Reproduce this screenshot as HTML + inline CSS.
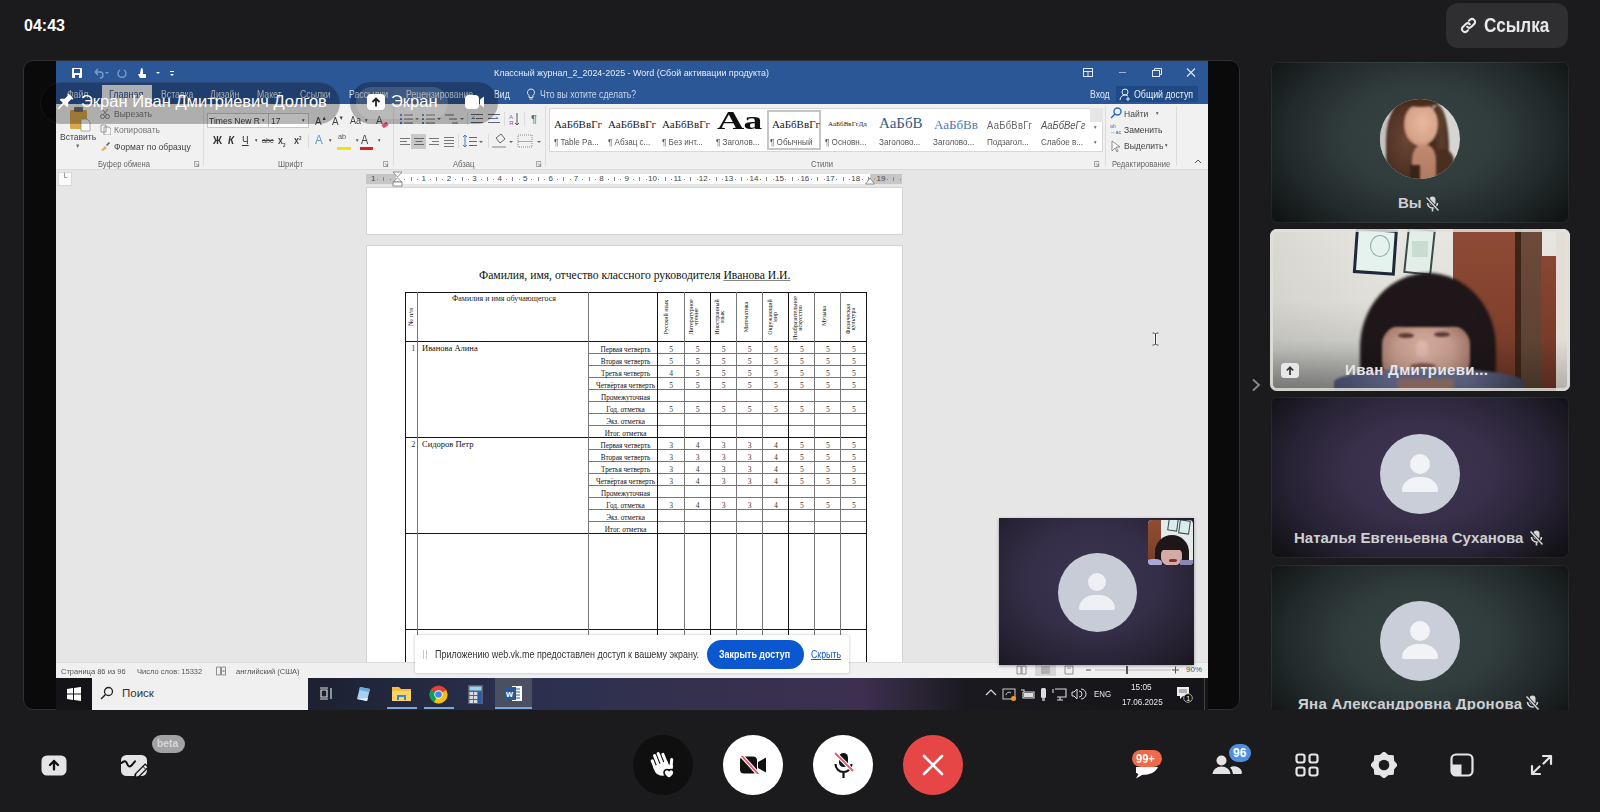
<!DOCTYPE html>
<html><head><meta charset="utf-8">
<style>
*{box-sizing:border-box;margin:0;padding:0}
html,body{width:1600px;height:812px;overflow:hidden;background:#1b1b1d;font-family:"Liberation Sans",sans-serif;position:relative}
.a{position:absolute}
.t{position:absolute;white-space:nowrap;line-height:1}
</style></head><body>
<!-- timer -->
<div class="t" style="left:24px;top:18px;font-size:16px;font-weight:bold;color:#fff">04:43</div>
<!-- link button -->
<div class="a" style="left:1446px;top:3px;width:122px;height:45px;border-radius:12px;background:#2f2f31"></div>
<div class="t" style="left:1484px;top:16px;font-size:19.5px;font-weight:bold;color:#e8e8ea;transform:scaleX(.88);transform-origin:0 0">Ссылка</div>
<svg class="a" style="left:1460px;top:17px" width="17" height="17" viewBox="0 0 17 17"><g fill="none" stroke="#e8e8ea" stroke-width="2" stroke-linecap="round"><path d="M7.2 9.8 a3 3 0 0 0 4.2 0 l3-3 a3 3 0 0 0 -4.2-4.2 l-1.3 1.3"/><path d="M9.8 7.2 a3 3 0 0 0 -4.2 0 l-3 3 a3 3 0 0 0 4.2 4.2 l1.3-1.3"/></g></svg>

<!-- stage -->
<div class="a" id="stage" style="left:23px;top:60px;width:1217px;height:650px;border-radius:10px;background:#0a0a0a;overflow:hidden">
  <div class="a" id="word" style="left:33px;top:0px;width:1152px;height:650px;background:#e6e6e6;overflow:hidden">

    <!-- title bar -->
    <div class="a" style="left:0;top:0;width:1152px;height:44px;background:#2b5797"></div>
    <!-- QAT icons -->
    <svg class="a" style="left:15px;top:7px" width="120" height="12" viewBox="0 0 120 12">
      <rect x="1" y="1" width="10" height="10" fill="#fff" rx="1"/><rect x="3" y="2" width="6" height="4" fill="#2b5797"/><rect x="4" y="8" width="4" height="3" fill="#2b5797"/>
      <path d="M24 5 l3-3 M24 5 l3 3 M24 5 h5 a3 3 0 0 1 0 6" stroke="#7d9fd0" stroke-width="1.3" fill="none"/>
      <path d="M34 5 l2 2 l2-2z" fill="#7d9fd0"/>
      <path d="M49 3 a4 4 0 1 0 4 0" stroke="#7d9fd0" stroke-width="1.3" fill="none"/>
      <path d="M70 1 a2 2 0 0 1 2 2 v4 h2 a1 1 0 0 1 1 1 v3 h-6 l-2-4 h2z" fill="#fff"/>
      <path d="M85 5 l2 2 l2-2z" fill="#fff"/>
      <rect x="99" y="4" width="4" height="1" fill="#fff"/><path d="M99 7 l2 2 l2-2z" fill="#fff"/>
    </svg>
    <div class="t" style="left:438px;top:8px;font-size:9.6px;color:#e8eef7;transform:scaleX(.93);transform-origin:0 0">Классный журнал_2_2024-2025 - Word (Сбой активации продукта)</div>
    <svg class="a" style="left:1026px;top:7px" width="126" height="12" viewBox="0 0 126 12">
      <rect x="1.5" y="1.5" width="9" height="8" stroke="#dfe7f3" stroke-width="1" fill="none"/><rect x="2" y="4" width="8" height="1" fill="#dfe7f3"/><rect x="5.5" y="4" width="1" height="5" fill="#dfe7f3"/>
      <rect x="37" y="5" width="7" height="1" fill="#9bb3d8"/>
      <rect x="70.5" y="3.5" width="7" height="6" stroke="#dfe7f3" stroke-width="1" fill="none"/><path d="M72.5 3.5 v-2 h7 v6 h-2" stroke="#dfe7f3" stroke-width="1" fill="none"/>
      <path d="M105 1.5 l8 8 M113 1.5 l-8 8" stroke="#dfe7f3" stroke-width="1.1"/>
    </svg>
    <!-- tabs -->
    <div class="t" style="left:11px;top:30px;font-size:10px;color:#dfe7f3;transform:scaleX(.87);transform-origin:0 0">Файл</div>
    <div class="a" style="left:46px;top:25px;width:50px;height:19px;background:#f1f1f1"></div>
    <div class="t" style="left:53px;top:30px;font-size:10px;color:#2b5797;transform:scaleX(.9);transform-origin:0 0">Главная</div>
    <div class="t" style="left:105px;top:30px;font-size:10px;color:#dfe7f3;transform:scaleX(.87);transform-origin:0 0">Вставка</div>
    <div class="t" style="left:154px;top:30px;font-size:10px;color:#dfe7f3;transform:scaleX(.87);transform-origin:0 0">Дизайн</div>
    <div class="t" style="left:201px;top:30px;font-size:10px;color:#dfe7f3;transform:scaleX(.87);transform-origin:0 0">Макет</div>
    <div class="t" style="left:244px;top:30px;font-size:10px;color:#dfe7f3;transform:scaleX(.87);transform-origin:0 0">Ссылки</div>
    <div class="t" style="left:293px;top:30px;font-size:10px;color:#dfe7f3;transform:scaleX(.87);transform-origin:0 0">Рассылки</div>
    <div class="t" style="left:350px;top:30px;font-size:10px;color:#dfe7f3;transform:scaleX(.87);transform-origin:0 0">Рецензирование</div>
    <div class="t" style="left:438px;top:30px;font-size:10px;color:#dfe7f3;transform:scaleX(.87);transform-origin:0 0">Вид</div>
    <svg class="a" style="left:470px;top:28px" width="10" height="13" viewBox="0 0 10 13"><path d="M5 1 a3.5 3.5 0 0 0 -2 6.4 v2 h4 v-2 a3.5 3.5 0 0 0 -2-6.4z M3.5 11 h3" stroke="#dfe7f3" stroke-width="1" fill="none"/></svg>
    <div class="t" style="left:484px;top:30px;font-size:10px;color:#c8d4e8;transform:scaleX(.87);transform-origin:0 0">Что вы хотите сделать?</div>
    <div class="t" style="left:1034px;top:30px;font-size:10px;color:#dfe7f3;transform:scaleX(.87);transform-origin:0 0">Вход</div>
    <div class="a" style="left:1060px;top:26px;width:82px;height:16px;background:#1f4a85"></div>
    <svg class="a" style="left:1063px;top:28px" width="13" height="13" viewBox="0 0 13 13"><circle cx="6" cy="4" r="3" stroke="#dfe7f3" stroke-width="1" fill="none"/><path d="M1 12 a5 5 0 0 1 8-4 M9 9 v4 M7 11 h4" stroke="#dfe7f3" stroke-width="1" fill="none"/></svg>
    <div class="t" style="left:1078px;top:30px;font-size:10px;color:#e8eef7;transform:scaleX(.88);transform-origin:0 0">Общий доступ</div>

    <div class="a" style="left:0;top:44px;width:1152px;height:66px;background:#f1f1f1;border-bottom:1px solid #dadada"></div>
    <div class="a" style="left:0;top:-2px;width:1152px;height:110px">
<!-- clipboard -->
    <svg class="a" style="left:12px;top:48px" width="24" height="26" viewBox="0 0 24 26">
      <rect x="2" y="4" width="17" height="19" fill="#d9a84a" rx="1"/><rect x="6" y="1" width="9" height="5" fill="#6d6d6d" rx="1"/>
      <path d="M13 13 h6 l3 3 v9 h-9z" fill="#fafafa" stroke="#9a9a9a" stroke-width="0.8"/>
    </svg>
    <div class="t" style="left:4px;top:74px;font-size:9.5px;color:#444;transform:scaleX(.9);transform-origin:0 0">Вставить</div>
    <div class="t" style="left:19px;top:85px;font-size:6px;color:#666;transform:scaleX(.9);transform-origin:0 0">▼</div>
    <svg class="a" style="left:44px;top:51px" width="10" height="10" viewBox="0 0 10 10"><circle cx="2.5" cy="7.5" r="2" stroke="#888" fill="none"/><circle cx="7.5" cy="7.5" r="2" stroke="#888" fill="none"/><path d="M3 6 L8 0 M7 6 L2 0" stroke="#888"/></svg>
    <div class="t" style="left:58px;top:51px;font-size:9.5px;color:#777;transform:scaleX(.9);transform-origin:0 0">Вырезать</div>
    <svg class="a" style="left:44px;top:66px" width="11" height="11" viewBox="0 0 11 11"><path d="M1 1h5v7H1z M4 3h5l2 2v6H4z" stroke="#888" stroke-width="0.8" fill="#f5f5f5"/></svg>
    <div class="t" style="left:58px;top:67px;font-size:9.5px;color:#777;transform:scaleX(.9);transform-origin:0 0">Копировать</div>
    <svg class="a" style="left:44px;top:82px" width="11" height="11" viewBox="0 0 11 11"><path d="M1 10 l4-4 l2 2 l-4 3z" fill="#e0b060"/><path d="M6 5 l3-3 l1 1 l-3 3z" fill="#555"/></svg>
    <div class="t" style="left:58px;top:84px;font-size:9.5px;color:#444;transform:scaleX(.9);transform-origin:0 0">Формат по образцу</div>
    <div class="t" style="left:42px;top:102px;font-size:8.5px;color:#666;transform:scaleX(.9);transform-origin:0 0">Буфер обмена</div>
    <div class="t" style="left:138px;top:103px;font-size:7px;color:#888;transform:scaleX(.9);transform-origin:0 0"><svg width="6" height="6" viewBox="0 0 6 6" style="display:block"><path d="M0.5 0.5 h5 v5 h-5z M2 2 l3 3 M5 3 v2 h-2" stroke="#888" stroke-width="0.8" fill="none"/></svg></div>
    <div class="a" style="left:147px;top:48px;width:1px;height:60px;background:#dcdcdc"></div>
    <!-- font -->
    <div class="a" style="left:151px;top:55px;width:62px;height:15px;background:#fff;border:1px solid #c6c6c6"></div>
    <div class="t" style="left:153px;top:58px;font-size:9.5px;color:#444;transform:scaleX(.9);transform-origin:0 0">Times New R</div>
    <div class="t" style="left:205px;top:60px;font-size:5px;color:#555;transform:scaleX(.9);transform-origin:0 0">▼</div>
    <div class="a" style="left:212px;top:55px;width:41px;height:15px;background:#fff;border:1px solid #c6c6c6"></div>
    <div class="t" style="left:215px;top:58px;font-size:9.5px;color:#444;transform:scaleX(.9);transform-origin:0 0">17</div>
    <div class="t" style="left:245px;top:60px;font-size:5px;color:#555;transform:scaleX(.9);transform-origin:0 0">▼</div>
    <div class="t" style="left:259px;top:57px;font-size:11px;color:#444;transform:scaleX(.9);transform-origin:0 0">A<sup style="font-size:6px">▲</sup></div>
    <div class="t" style="left:276px;top:57px;font-size:11px;color:#444;transform:scaleX(.9);transform-origin:0 0">A<sup style="font-size:6px">▼</sup></div>
    <div class="t" style="left:294px;top:58px;font-size:10px;color:#444;transform:scaleX(.9);transform-origin:0 0">Aa</div><div class="t" style="left:308px;top:60px;font-size:5px;color:#555;transform:scaleX(.9);transform-origin:0 0">▼</div>
    <div class="t" style="left:320px;top:57px;font-size:11px;color:#555;transform:scaleX(.9);transform-origin:0 0">A</div><div class="a" style="left:326px;top:65px;width:6px;height:4px;background:#e0506a;transform:rotate(-35deg)"></div>
    <div class="t" style="left:157px;top:77px;font-size:11px;font-weight:bold;color:#333;transform:scaleX(.9);transform-origin:0 0">Ж</div>
    <div class="t" style="left:172px;top:77px;font-size:11px;font-weight:bold;font-style:italic;color:#333;transform:scaleX(.9);transform-origin:0 0">К</div>
    <div class="t" style="left:186px;top:77px;font-size:11px;color:#333;text-decoration:underline;transform:scaleX(.9);transform-origin:0 0">Ч</div>
    <div class="t" style="left:198px;top:80px;font-size:5px;color:#555;transform:scaleX(.9);transform-origin:0 0">▼</div>
    <div class="t" style="left:206px;top:79px;font-size:8px;color:#444;text-decoration:line-through;transform:scaleX(.9);transform-origin:0 0">abc</div>
    <div class="t" style="left:222px;top:78px;font-size:10px;font-weight:bold;color:#444;transform:scaleX(.9);transform-origin:0 0">x<sub style="font-size:5px">2</sub></div>
    <div class="t" style="left:238px;top:78px;font-size:10px;font-weight:bold;color:#444;transform:scaleX(.9);transform-origin:0 0">x<sup style="font-size:5px">2</sup></div>
    <div class="a" style="left:252px;top:76px;width:1px;height:14px;background:#dcdcdc"></div>
    <div class="t" style="left:259px;top:75px;font-size:13px;color:#5a9ad8;transform:scaleX(.9);transform-origin:0 0">A</div><div class="t" style="left:272px;top:80px;font-size:5px;color:#555;transform:scaleX(.9);transform-origin:0 0">▼</div>
    <div class="t" style="left:282px;top:75px;font-size:8px;color:#555;transform:scaleX(.9);transform-origin:0 0">ab</div><div class="a" style="left:281px;top:89px;width:14px;height:3px;background:#f5e10a"></div><div class="t" style="left:299px;top:80px;font-size:5px;color:#555;transform:scaleX(.9);transform-origin:0 0">▼</div>
    <div class="t" style="left:305px;top:76px;font-size:12px;color:#444;transform:scaleX(.9);transform-origin:0 0">A</div><div class="a" style="left:304px;top:89px;width:13px;height:3px;background:#d8201c"></div><div class="t" style="left:321px;top:80px;font-size:5px;color:#555;transform:scaleX(.9);transform-origin:0 0">▼</div>
    <div class="t" style="left:222px;top:102px;font-size:8.5px;color:#666;transform:scaleX(.9);transform-origin:0 0">Шрифт</div>
    <div class="t" style="left:327px;top:103px;font-size:7px;color:#888;transform:scaleX(.9);transform-origin:0 0"><svg width="6" height="6" viewBox="0 0 6 6" style="display:block"><path d="M0.5 0.5 h5 v5 h-5z M2 2 l3 3 M5 3 v2 h-2" stroke="#888" stroke-width="0.8" fill="none"/></svg></div>
    <div class="a" style="left:337px;top:48px;width:1px;height:60px;background:#dcdcdc"></div>
    <!-- paragraph -->
    <svg class="a" style="left:342px;top:54px" width="150" height="40" viewBox="0 0 150 40">
      <g fill="#4a7cc0"><circle cx="3" cy="3" r="1.2"/><circle cx="3" cy="7" r="1.2"/><circle cx="3" cy="11" r="1.2"/></g>
      <g fill="#666"><rect x="6" y="2.5" width="9" height="1"/><rect x="6" y="6.5" width="9" height="1"/><rect x="6" y="10.5" width="9" height="1"/></g>
      <path d="M17 6 l2 2 l2-2z" fill="#666"/>
      <g fill="#4a7cc0"><rect x="24" y="2" width="2" height="2"/><rect x="24" y="6" width="2" height="2"/><rect x="24" y="10" width="2" height="2"/></g>
      <g fill="#666"><rect x="28" y="2.5" width="9" height="1"/><rect x="28" y="6.5" width="9" height="1"/><rect x="28" y="10.5" width="9" height="1"/></g>
      <path d="M39 6 l2 2 l2-2z" fill="#666"/>
      <g fill="#666"><rect x="47" y="2.5" width="9" height="1"/><rect x="51" y="6.5" width="8" height="1"/><rect x="54" y="10.5" width="6" height="1"/></g>
      <path d="M62 6 l2 2 l2-2z" fill="#666"/>
      <rect x="69" y="0" width="1" height="14" fill="#dcdcdc"/>
      <g fill="#666"><rect x="73" y="2" width="12" height="1"/><rect x="78" y="6" width="7" height="1"/><rect x="73" y="10" width="12" height="1"/><rect x="90" y="2" width="12" height="1"/><rect x="90" y="6" width="7" height="1"/><rect x="90" y="10" width="12" height="1"/></g>
      <path d="M77 6.5 l-3 0 l2-2" stroke="#4a7cc0" fill="none"/><path d="M96 6.5 l4 0 l-2-2" stroke="#4a7cc0" fill="none"/>
      <rect x="106" y="0" width="1" height="14" fill="#dcdcdc"/>
      <text x="111" y="7" font-size="6" fill="#4a7cc0" font-family="Liberation Sans">A</text><text x="111" y="13" font-size="6" fill="#c040a0" font-family="Liberation Sans">Я</text><path d="M119 1 v12 l-2-2 M119 13 l2-2" stroke="#555" fill="none"/>
      <rect x="126" y="0" width="1" height="14" fill="#dcdcdc"/>
      <text x="133" y="11" font-size="11" fill="#666" font-family="Liberation Sans">¶</text>
      <g fill="#777"><rect x="57" y="20" width="0" height="0"/></g>
    </svg>
    <svg class="a" style="left:340px;top:74px" width="200" height="20" viewBox="0 0 200 20">
      <g fill="#777"><rect x="4" y="6" width="10" height="1"/><rect x="4" y="9" width="7" height="1"/><rect x="4" y="12" width="10" height="1"/></g>
      <rect x="15" y="2" width="15" height="15" fill="#c9c9c9"/>
      <g fill="#666"><rect x="18" y="6" width="10" height="1"/><rect x="19.5" y="9" width="7" height="1"/><rect x="18" y="12" width="10" height="1"/></g>
      <g fill="#777"><rect x="33" y="6" width="10" height="1"/><rect x="36" y="9" width="7" height="1"/><rect x="33" y="12" width="10" height="1"/></g>
      <g fill="#777"><rect x="48" y="5" width="10" height="1"/><rect x="48" y="8" width="10" height="1"/><rect x="48" y="11" width="10" height="1"/><rect x="48" y="14" width="10" height="1"/></g>
      <rect x="62" y="2" width="1" height="14" fill="#dcdcdc"/>
      <path d="M69 3 v12 M67 5 l2-2 l2 2 M67 13 l2 2 l2-2" stroke="#4a7cc0" fill="none"/><g fill="#666"><rect x="73" y="5" width="8" height="1"/><rect x="73" y="9" width="8" height="1"/><rect x="73" y="13" width="8" height="1"/></g>
      <path d="M83 9 l2 2 l2-2z" fill="#666"/>
      <rect x="92" y="2" width="1" height="14" fill="#dcdcdc"/>
      <path d="M100 6 l5-4 l4 5 l-5 4z" stroke="#666" fill="none"/><rect x="96" y="14" width="14" height="2" fill="#bbb"/>
      <path d="M113 9 l2 2 l2-2z" fill="#666"/>
      <rect x="122" y="3" width="14" height="12" stroke="#888" stroke-dasharray="1 1" fill="none"/><rect x="122" y="9" width="14" height="0.8" fill="#999"/>
      <path d="M141 9 l2 2 l2-2z" fill="#666"/>
    </svg>
    <div class="t" style="left:397px;top:102px;font-size:8.5px;color:#666;transform:scaleX(.9);transform-origin:0 0">Абзац</div>
    <div class="t" style="left:480px;top:103px;font-size:7px;color:#888;transform:scaleX(.9);transform-origin:0 0"><svg width="6" height="6" viewBox="0 0 6 6" style="display:block"><path d="M0.5 0.5 h5 v5 h-5z M2 2 l3 3 M5 3 v2 h-2" stroke="#888" stroke-width="0.8" fill="none"/></svg></div>
    <div class="a" style="left:489px;top:48px;width:1px;height:60px;background:#dcdcdc"></div>
    <!-- styles gallery -->
    <div class="a" style="left:493px;top:49.5px;width:554px;height:44px;background:#fff;border:1px solid #d8d8d8"></div>
    <div class="a" id="gal" style="left:494px;top:50.5px;width:540px;height:42px">
      <div class="t" style="left:4px;top:10px;font-size:11px;font-family:'Liberation Serif',serif;color:#222">АаБбВвГг</div><div class="t" style="left:4px;top:29px;font-size:9px;color:#555;transform:scaleX(.9);transform-origin:0 0">¶ Table Pa...</div>
      <div class="t" style="left:58px;top:10px;font-size:11px;font-family:'Liberation Serif',serif;color:#222">АаБбВвГг</div><div class="t" style="left:58px;top:29px;font-size:9px;color:#555;transform:scaleX(.9);transform-origin:0 0">¶ Абзац с...</div>
      <div class="t" style="left:112px;top:10px;font-size:11px;font-family:'Liberation Serif',serif;color:#222">АаБбВвГг</div><div class="t" style="left:112px;top:29px;font-size:9px;color:#555;transform:scaleX(.9);transform-origin:0 0">¶ Без инт...</div>
      <div class="t" style="left:167px;top:-1px;font-size:26px;font-family:'Liberation Serif',serif;font-weight:bold;color:#111;letter-spacing:-0.5px;transform:scaleX(1.45);transform-origin:0 0">Aa</div><div class="t" style="left:166px;top:29px;font-size:9px;color:#555;transform:scaleX(.9);transform-origin:0 0">¶ Заголов...</div>
      <div class="a" style="left:217px;top:1px;width:54px;height:40px;border:2px solid #c6c6c6"></div>
      <div class="t" style="left:222px;top:10px;font-size:11px;font-family:'Liberation Serif',serif;color:#222">АаБбВвГг</div><div class="t" style="left:220px;top:29px;font-size:9px;color:#555;transform:scaleX(.9);transform-origin:0 0">¶ Обычный</div>
      <div class="t" style="left:278px;top:12px;font-size:7px;font-family:'Liberation Serif',serif;color:#222">АаБбВвГгДд</div><div class="t" style="left:275px;top:29px;font-size:9px;color:#555;transform:scaleX(.9);transform-origin:0 0">¶ Основн...</div>
      <div class="t" style="left:329px;top:7px;font-size:15px;font-family:'Liberation Serif',serif;color:#2e5c8a">АаБбВ</div><div class="t" style="left:329px;top:29px;font-size:9px;color:#555;transform:scaleX(.9);transform-origin:0 0">Заголово...</div>
      <div class="t" style="left:384px;top:9px;font-size:13px;font-family:'Liberation Serif',serif;color:#4a7ab5">АаБбВв</div><div class="t" style="left:383px;top:29px;font-size:9px;color:#555;transform:scaleX(.9);transform-origin:0 0">Заголово...</div>
      <div class="t" style="left:437px;top:11px;font-size:10.5px;color:#666;letter-spacing:0.3px;transform:scaleX(.9);transform-origin:0 0">АаБбВвГг</div><div class="t" style="left:437px;top:29px;font-size:9px;color:#555;transform:scaleX(.9);transform-origin:0 0">Подзагол...</div>
      <div class="t" style="left:491px;top:11px;font-size:10.5px;font-style:italic;color:#555;transform:scaleX(.9);transform-origin:0 0">АаБбВеГг</div><div class="t" style="left:491px;top:29px;font-size:9px;color:#555;transform:scaleX(.9);transform-origin:0 0">Слабое в...</div>
    </div>
    <div class="a" style="left:1034px;top:50px;width:13px;height:14px;background:#e6e6e6"></div>
    <div class="t" style="left:1037px;top:67px;font-size:5px;color:#666;transform:scaleX(.9);transform-origin:0 0">▼</div>
    <div class="t" style="left:1037px;top:82px;font-size:5px;color:#666;transform:scaleX(.9);transform-origin:0 0">▼</div>
    <div class="t" style="left:755px;top:102px;font-size:8.5px;color:#666;transform:scaleX(.9);transform-origin:0 0">Стили</div>
    <div class="t" style="left:1038px;top:103px;font-size:7px;color:#888;transform:scaleX(.9);transform-origin:0 0"><svg width="6" height="6" viewBox="0 0 6 6" style="display:block"><path d="M0.5 0.5 h5 v5 h-5z M2 2 l3 3 M5 3 v2 h-2" stroke="#888" stroke-width="0.8" fill="none"/></svg></div>
    <div class="a" style="left:1049px;top:48px;width:1px;height:60px;background:#dcdcdc"></div>
    <!-- editing -->
    <svg class="a" style="left:1054px;top:49px" width="12" height="12" viewBox="0 0 12 12"><circle cx="7.5" cy="4.5" r="3.5" stroke="#2b6cb8" stroke-width="1.4" fill="none"/><path d="M5 7 L1 11" stroke="#2b6cb8" stroke-width="1.6"/></svg>
    <div class="t" style="left:1068px;top:51px;font-size:9.5px;color:#444;transform:scaleX(.9);transform-origin:0 0">Найти</div><div class="t" style="left:1099px;top:53px;font-size:5px;color:#555;transform:scaleX(.9);transform-origin:0 0">▼</div>
    <div class="t" style="left:1054px;top:65px;font-size:6px;color:#9060b0;transform:scaleX(.9);transform-origin:0 0">ab</div><div class="t" style="left:1054px;top:71px;font-size:6px;color:#2b6cb8;transform:scaleX(.9);transform-origin:0 0">→ac</div>
    <div class="t" style="left:1068px;top:67px;font-size:9.5px;color:#444;transform:scaleX(.9);transform-origin:0 0">Заменить</div>
    <svg class="a" style="left:1055px;top:82px" width="9" height="13" viewBox="0 0 9 13"><path d="M1 1 v10 l3-3 l2 4 l1-1 l-2-4 h4z" stroke="#777" stroke-width="0.8" fill="#fff"/></svg>
    <div class="t" style="left:1068px;top:83px;font-size:9.5px;color:#444;transform:scaleX(.9);transform-origin:0 0">Выделить</div><div class="t" style="left:1108px;top:85px;font-size:5px;color:#555;transform:scaleX(.9);transform-origin:0 0">▼</div>
    <div class="t" style="left:1056px;top:102px;font-size:8.5px;color:#666;transform:scaleX(.9);transform-origin:0 0">Редактирование</div>
    <div class="a" style="left:1120px;top:48px;width:1px;height:60px;background:#dcdcdc"></div>
    <svg class="a" style="left:1138px;top:100px" width="8" height="6" viewBox="0 0 8 6"><path d="M1 5 l3-3 l3 3" stroke="#555" fill="none"/></svg>
</div>
<!-- ruler/doc -->
<div class="a" style="left:2.0px;top:112.0px;width:14.0px;height:14.0px;background:#fafafa;border:1px solid #d8d8d8"></div>
<div class="t" style="left:6.0px;top:114.0px;font-size:8px;color:#555;transform:scaleX(.94);transform-origin:0 0">└</div>
<div class="a" style="left:310.0px;top:114.0px;width:536.0px;height:10.0px;background:#c6c6c6"></div>
<div class="a" style="left:340.0px;top:114.0px;width:474.0px;height:10.0px;background:#fff"></div>
<div class="t" style="left:315.0px;top:115.0px;font-size:8px;color:#444">1</div>
<div class="a" style="left:327.0px;top:117.0px;width:1.0px;height:4.0px;background:#888"></div>
<div class="a" style="left:334.0px;top:119.0px;width:1.0px;height:1.0px;background:#888"></div>
<div class="a" style="left:321.0px;top:119.0px;width:1.0px;height:1.0px;background:#888"></div>
<div class="t" style="left:365.4px;top:115.0px;font-size:8px;color:#444">1</div>
<div class="t" style="left:390.8px;top:115.0px;font-size:8px;color:#444">2</div>
<div class="t" style="left:416.2px;top:115.0px;font-size:8px;color:#444">3</div>
<div class="t" style="left:441.6px;top:115.0px;font-size:8px;color:#444">4</div>
<div class="t" style="left:467.0px;top:115.0px;font-size:8px;color:#444">5</div>
<div class="t" style="left:492.4px;top:115.0px;font-size:8px;color:#444">6</div>
<div class="t" style="left:517.8px;top:115.0px;font-size:8px;color:#444">7</div>
<div class="t" style="left:543.2px;top:115.0px;font-size:8px;color:#444">8</div>
<div class="t" style="left:568.6px;top:115.0px;font-size:8px;color:#444">9</div>
<div class="t" style="left:592.0px;top:115.0px;font-size:8px;color:#444">10</div>
<div class="t" style="left:617.4px;top:115.0px;font-size:8px;color:#444">11</div>
<div class="t" style="left:642.8px;top:115.0px;font-size:8px;color:#444">12</div>
<div class="t" style="left:668.2px;top:115.0px;font-size:8px;color:#444">13</div>
<div class="t" style="left:693.6px;top:115.0px;font-size:8px;color:#444">14</div>
<div class="t" style="left:719.0px;top:115.0px;font-size:8px;color:#444">15</div>
<div class="t" style="left:744.4px;top:115.0px;font-size:8px;color:#444">16</div>
<div class="t" style="left:769.8px;top:115.0px;font-size:8px;color:#444">17</div>
<div class="t" style="left:795.2px;top:115.0px;font-size:8px;color:#444">18</div>
<div class="t" style="left:820.6px;top:115.0px;font-size:8px;color:#444">19</div>
<div class="a" style="left:348.4px;top:119.0px;width:1.0px;height:1.0px;background:#888"></div>
<div class="a" style="left:354.7px;top:117.0px;width:1.0px;height:4.0px;background:#888"></div>
<div class="a" style="left:361.1px;top:119.0px;width:1.0px;height:1.0px;background:#888"></div>
<div class="a" style="left:373.8px;top:119.0px;width:1.0px;height:1.0px;background:#888"></div>
<div class="a" style="left:380.1px;top:117.0px;width:1.0px;height:4.0px;background:#888"></div>
<div class="a" style="left:386.4px;top:119.0px;width:1.0px;height:1.0px;background:#888"></div>
<div class="a" style="left:399.1px;top:119.0px;width:1.0px;height:1.0px;background:#888"></div>
<div class="a" style="left:405.5px;top:117.0px;width:1.0px;height:4.0px;background:#888"></div>
<div class="a" style="left:411.9px;top:119.0px;width:1.0px;height:1.0px;background:#888"></div>
<div class="a" style="left:424.6px;top:119.0px;width:1.0px;height:1.0px;background:#888"></div>
<div class="a" style="left:430.9px;top:117.0px;width:1.0px;height:4.0px;background:#888"></div>
<div class="a" style="left:437.2px;top:119.0px;width:1.0px;height:1.0px;background:#888"></div>
<div class="a" style="left:449.9px;top:119.0px;width:1.0px;height:1.0px;background:#888"></div>
<div class="a" style="left:456.3px;top:117.0px;width:1.0px;height:4.0px;background:#888"></div>
<div class="a" style="left:462.6px;top:119.0px;width:1.0px;height:1.0px;background:#888"></div>
<div class="a" style="left:475.4px;top:119.0px;width:1.0px;height:1.0px;background:#888"></div>
<div class="a" style="left:481.7px;top:117.0px;width:1.0px;height:4.0px;background:#888"></div>
<div class="a" style="left:488.0px;top:119.0px;width:1.0px;height:1.0px;background:#888"></div>
<div class="a" style="left:500.8px;top:119.0px;width:1.0px;height:1.0px;background:#888"></div>
<div class="a" style="left:507.1px;top:117.0px;width:1.0px;height:4.0px;background:#888"></div>
<div class="a" style="left:513.5px;top:119.0px;width:1.0px;height:1.0px;background:#888"></div>
<div class="a" style="left:526.1px;top:119.0px;width:1.0px;height:1.0px;background:#888"></div>
<div class="a" style="left:532.5px;top:117.0px;width:1.0px;height:4.0px;background:#888"></div>
<div class="a" style="left:538.9px;top:119.0px;width:1.0px;height:1.0px;background:#888"></div>
<div class="a" style="left:551.5px;top:119.0px;width:1.0px;height:1.0px;background:#888"></div>
<div class="a" style="left:557.9px;top:117.0px;width:1.0px;height:4.0px;background:#888"></div>
<div class="a" style="left:564.2px;top:119.0px;width:1.0px;height:1.0px;background:#888"></div>
<div class="a" style="left:577.0px;top:119.0px;width:1.0px;height:1.0px;background:#888"></div>
<div class="a" style="left:583.3px;top:117.0px;width:1.0px;height:4.0px;background:#888"></div>
<div class="a" style="left:589.6px;top:119.0px;width:1.0px;height:1.0px;background:#888"></div>
<div class="a" style="left:602.3px;top:119.0px;width:1.0px;height:1.0px;background:#888"></div>
<div class="a" style="left:608.7px;top:117.0px;width:1.0px;height:4.0px;background:#888"></div>
<div class="a" style="left:615.0px;top:119.0px;width:1.0px;height:1.0px;background:#888"></div>
<div class="a" style="left:627.8px;top:119.0px;width:1.0px;height:1.0px;background:#888"></div>
<div class="a" style="left:634.1px;top:117.0px;width:1.0px;height:4.0px;background:#888"></div>
<div class="a" style="left:640.5px;top:119.0px;width:1.0px;height:1.0px;background:#888"></div>
<div class="a" style="left:653.1px;top:119.0px;width:1.0px;height:1.0px;background:#888"></div>
<div class="a" style="left:659.5px;top:117.0px;width:1.0px;height:4.0px;background:#888"></div>
<div class="a" style="left:665.8px;top:119.0px;width:1.0px;height:1.0px;background:#888"></div>
<div class="a" style="left:678.5px;top:119.0px;width:1.0px;height:1.0px;background:#888"></div>
<div class="a" style="left:684.9px;top:117.0px;width:1.0px;height:4.0px;background:#888"></div>
<div class="a" style="left:691.2px;top:119.0px;width:1.0px;height:1.0px;background:#888"></div>
<div class="a" style="left:704.0px;top:119.0px;width:1.0px;height:1.0px;background:#888"></div>
<div class="a" style="left:710.3px;top:117.0px;width:1.0px;height:4.0px;background:#888"></div>
<div class="a" style="left:716.6px;top:119.0px;width:1.0px;height:1.0px;background:#888"></div>
<div class="a" style="left:729.3px;top:119.0px;width:1.0px;height:1.0px;background:#888"></div>
<div class="a" style="left:735.7px;top:117.0px;width:1.0px;height:4.0px;background:#888"></div>
<div class="a" style="left:742.0px;top:119.0px;width:1.0px;height:1.0px;background:#888"></div>
<div class="a" style="left:754.8px;top:119.0px;width:1.0px;height:1.0px;background:#888"></div>
<div class="a" style="left:761.1px;top:117.0px;width:1.0px;height:4.0px;background:#888"></div>
<div class="a" style="left:767.5px;top:119.0px;width:1.0px;height:1.0px;background:#888"></div>
<div class="a" style="left:780.1px;top:119.0px;width:1.0px;height:1.0px;background:#888"></div>
<div class="a" style="left:786.5px;top:117.0px;width:1.0px;height:4.0px;background:#888"></div>
<div class="a" style="left:792.8px;top:119.0px;width:1.0px;height:1.0px;background:#888"></div>
<div class="a" style="left:805.5px;top:119.0px;width:1.0px;height:1.0px;background:#888"></div>
<div class="a" style="left:811.9px;top:117.0px;width:1.0px;height:4.0px;background:#888"></div>
<div class="a" style="left:818.2px;top:119.0px;width:1.0px;height:1.0px;background:#888"></div>
<div class="a" style="left:831.0px;top:119.0px;width:1.0px;height:1.0px;background:#888"></div>
<div class="a" style="left:837.3px;top:117.0px;width:1.0px;height:4.0px;background:#888"></div>
<div class="a" style="left:843.6px;top:119.0px;width:1.0px;height:1.0px;background:#888"></div>
<svg class="a" style="left:336px;top:111px" width="12" height="16" viewBox="0 0 12 16"><path d="M1 1 h9 l-4.5 5z M5.5 7 l4.5 4 h-9z" fill="#fff" stroke="#777" stroke-width="0.8"/><rect x="1" y="11" width="9" height="4" fill="#fff" stroke="#777" stroke-width="0.8"/></svg>
<svg class="a" style="left:809px;top:117px" width="10" height="8" viewBox="0 0 10 8"><path d="M5 1 l4.5 6 h-9z" fill="#fff" stroke="#777" stroke-width="0.8"/></svg>
<div class="a" style="left:311.0px;top:128.0px;width:535.0px;height:46.0px;background:#fff;box-shadow:0 0 0 1px #d4d4d4"></div>
<div class="a" style="left:311.0px;top:186.0px;width:535.0px;height:430.0px;background:#fff;box-shadow:0 0 0 1px #d4d4d4"></div>
<div class="t" style="left:423.0px;top:210.0px;font-family:'Liberation Serif',serif;font-size:11.65px;color:#111">Фамилия, имя, отчество классного руководителя <span style="text-decoration:underline;text-decoration-color:#888">Иванова И.И.</span></div>
<div class="a" style="left:349.0px;top:232.0px;width:462.0px;height:1.1px;background:#151515"></div>
<div class="a" style="left:349.0px;top:281.0px;width:462.0px;height:1.1px;background:#151515"></div>
<div class="a" style="left:532.0px;top:293.0px;width:279.0px;height:1.0px;background:#767676"></div>
<div class="a" style="left:532.0px;top:305.0px;width:279.0px;height:1.0px;background:#767676"></div>
<div class="a" style="left:532.0px;top:317.0px;width:279.0px;height:1.0px;background:#767676"></div>
<div class="a" style="left:532.0px;top:329.0px;width:279.0px;height:1.0px;background:#767676"></div>
<div class="a" style="left:532.0px;top:341.0px;width:279.0px;height:1.0px;background:#767676"></div>
<div class="a" style="left:532.0px;top:353.0px;width:279.0px;height:1.0px;background:#767676"></div>
<div class="a" style="left:532.0px;top:365.0px;width:279.0px;height:1.0px;background:#767676"></div>
<div class="a" style="left:349.0px;top:377.0px;width:462.0px;height:1.1px;background:#151515"></div>
<div class="a" style="left:532.0px;top:389.0px;width:279.0px;height:1.0px;background:#767676"></div>
<div class="a" style="left:532.0px;top:401.0px;width:279.0px;height:1.0px;background:#767676"></div>
<div class="a" style="left:532.0px;top:413.0px;width:279.0px;height:1.0px;background:#767676"></div>
<div class="a" style="left:532.0px;top:425.0px;width:279.0px;height:1.0px;background:#767676"></div>
<div class="a" style="left:532.0px;top:437.0px;width:279.0px;height:1.0px;background:#767676"></div>
<div class="a" style="left:532.0px;top:449.0px;width:279.0px;height:1.0px;background:#767676"></div>
<div class="a" style="left:532.0px;top:461.0px;width:279.0px;height:1.0px;background:#767676"></div>
<div class="a" style="left:349.0px;top:473.0px;width:462.0px;height:1.1px;background:#151515"></div>
<div class="a" style="left:349.0px;top:569.0px;width:462.0px;height:1.1px;background:#151515"></div>
<div class="a" style="left:349.0px;top:232.0px;width:1.1px;height:382.5px;background:#151515"></div>
<div class="a" style="left:361.0px;top:232.0px;width:1.0px;height:382.5px;background:#767676"></div>
<div class="a" style="left:532.0px;top:232.0px;width:1.0px;height:382.5px;background:#767676"></div>
<div class="a" style="left:601.0px;top:232.0px;width:1.1px;height:382.5px;background:#151515"></div>
<div class="a" style="left:628.0px;top:232.0px;width:1.0px;height:382.5px;background:#767676"></div>
<div class="a" style="left:654.0px;top:232.0px;width:1.1px;height:382.5px;background:#151515"></div>
<div class="a" style="left:680.0px;top:232.0px;width:1.0px;height:382.5px;background:#767676"></div>
<div class="a" style="left:706.0px;top:232.0px;width:1.0px;height:382.5px;background:#767676"></div>
<div class="a" style="left:732.0px;top:232.0px;width:1.1px;height:382.5px;background:#151515"></div>
<div class="a" style="left:758.0px;top:232.0px;width:1.0px;height:382.5px;background:#767676"></div>
<div class="a" style="left:784.0px;top:232.0px;width:1.0px;height:382.5px;background:#767676"></div>
<div class="a" style="left:810.0px;top:232.0px;width:1.1px;height:382.5px;background:#151515"></div>
<div class="t" style="left:396.0px;top:235.0px;font-family:'Liberation Serif',serif;font-size:8px;color:#222">Фамилия и имя обучающегося</div>
<div class="t" style="left:355.5px;top:257.0px;font-family:'Liberation Serif',serif;font-size:7px;color:#111;transform:translate(-50%,-50%) rotate(-90deg);text-align:center;line-height:0.75">№ п/п</div>
<div class="t" style="left:610.0px;top:257.0px;font-family:'Liberation Serif',serif;font-size:6px;color:#111;transform:translate(-50%,-50%) rotate(-90deg);text-align:center;line-height:0.75">Русский язык</div>
<div class="t" style="left:636.5px;top:257.0px;font-family:'Liberation Serif',serif;font-size:6px;color:#111;transform:translate(-50%,-50%) rotate(-90deg);text-align:center;line-height:0.75">Литературное<br>чтение</div>
<div class="t" style="left:662.5px;top:257.0px;font-family:'Liberation Serif',serif;font-size:6px;color:#111;transform:translate(-50%,-50%) rotate(-90deg);text-align:center;line-height:0.75">Иностранный<br>язык</div>
<div class="t" style="left:689.5px;top:256.5px;font-family:'Liberation Serif',serif;font-size:6px;color:#111;transform:translate(-50%,-50%) rotate(-90deg);text-align:center;line-height:0.75">Математика</div>
<div class="t" style="left:715.5px;top:257.0px;font-family:'Liberation Serif',serif;font-size:6px;color:#111;transform:translate(-50%,-50%) rotate(-90deg);text-align:center;line-height:0.75">Окружающий<br>мир</div>
<div class="t" style="left:740.5px;top:258.0px;font-family:'Liberation Serif',serif;font-size:6px;color:#111;transform:translate(-50%,-50%) rotate(-90deg);text-align:center;line-height:0.75">Изобразительное<br>искусство</div>
<div class="t" style="left:767.5px;top:256.0px;font-family:'Liberation Serif',serif;font-size:6px;color:#111;transform:translate(-50%,-50%) rotate(-90deg);text-align:center;line-height:0.75">Музыка</div>
<div class="t" style="left:794.0px;top:259.0px;font-family:'Liberation Serif',serif;font-size:6px;color:#111;transform:translate(-50%,-50%) rotate(-90deg);text-align:center;line-height:0.75">Физическая<br>культура</div>
<div class="t" style="left:355.5px;top:284.5px;font-family:'Liberation Serif',serif;font-size:7.5px;color:#222">1</div>
<div class="t" style="left:366.0px;top:284.0px;font-family:'Liberation Serif',serif;font-size:8.5px;color:#111">Иванова Алина</div>
<div class="t" style="left:535px;top:286.7px;width:69px;text-align:center;font-family:'Liberation Serif',serif;font-size:7.2px;color:#111">Первая четверть</div>
<div class="t" style="left:601.5px;top:285.9px;width:26.5px;text-align:center;font-family:'Liberation Serif',serif;font-size:7.6px;color:#3a3a3a;padding-left:1px">5</div>
<div class="t" style="left:628.0px;top:285.9px;width:26.5px;text-align:center;font-family:'Liberation Serif',serif;font-size:7.6px;color:#3a3a3a;padding-left:1px">5</div>
<div class="t" style="left:654.5px;top:285.9px;width:25.5px;text-align:center;font-family:'Liberation Serif',serif;font-size:7.6px;color:#3a3a3a;padding-left:1px">5</div>
<div class="t" style="left:680.0px;top:285.9px;width:26.5px;text-align:center;font-family:'Liberation Serif',serif;font-size:7.6px;color:#3a3a3a;padding-left:1px">5</div>
<div class="t" style="left:706.5px;top:285.9px;width:26.0px;text-align:center;font-family:'Liberation Serif',serif;font-size:7.6px;color:#3a3a3a;padding-left:1px">5</div>
<div class="t" style="left:732.5px;top:285.9px;width:26.0px;text-align:center;font-family:'Liberation Serif',serif;font-size:7.6px;color:#3a3a3a;padding-left:1px">5</div>
<div class="t" style="left:758.5px;top:285.9px;width:26.0px;text-align:center;font-family:'Liberation Serif',serif;font-size:7.6px;color:#3a3a3a;padding-left:1px">5</div>
<div class="t" style="left:784.5px;top:285.9px;width:26.0px;text-align:center;font-family:'Liberation Serif',serif;font-size:7.6px;color:#3a3a3a;padding-left:1px">5</div>
<div class="t" style="left:535px;top:298.7px;width:69px;text-align:center;font-family:'Liberation Serif',serif;font-size:7.2px;color:#111">Вторая четверть</div>
<div class="t" style="left:601.5px;top:297.9px;width:26.5px;text-align:center;font-family:'Liberation Serif',serif;font-size:7.6px;color:#3a3a3a;padding-left:1px">5</div>
<div class="t" style="left:628.0px;top:297.9px;width:26.5px;text-align:center;font-family:'Liberation Serif',serif;font-size:7.6px;color:#3a3a3a;padding-left:1px">5</div>
<div class="t" style="left:654.5px;top:297.9px;width:25.5px;text-align:center;font-family:'Liberation Serif',serif;font-size:7.6px;color:#3a3a3a;padding-left:1px">5</div>
<div class="t" style="left:680.0px;top:297.9px;width:26.5px;text-align:center;font-family:'Liberation Serif',serif;font-size:7.6px;color:#3a3a3a;padding-left:1px">5</div>
<div class="t" style="left:706.5px;top:297.9px;width:26.0px;text-align:center;font-family:'Liberation Serif',serif;font-size:7.6px;color:#3a3a3a;padding-left:1px">5</div>
<div class="t" style="left:732.5px;top:297.9px;width:26.0px;text-align:center;font-family:'Liberation Serif',serif;font-size:7.6px;color:#3a3a3a;padding-left:1px">5</div>
<div class="t" style="left:758.5px;top:297.9px;width:26.0px;text-align:center;font-family:'Liberation Serif',serif;font-size:7.6px;color:#3a3a3a;padding-left:1px">5</div>
<div class="t" style="left:784.5px;top:297.9px;width:26.0px;text-align:center;font-family:'Liberation Serif',serif;font-size:7.6px;color:#3a3a3a;padding-left:1px">5</div>
<div class="t" style="left:535px;top:310.7px;width:69px;text-align:center;font-family:'Liberation Serif',serif;font-size:7.2px;color:#111">Третья четверть</div>
<div class="t" style="left:601.5px;top:309.9px;width:26.5px;text-align:center;font-family:'Liberation Serif',serif;font-size:7.6px;color:#3a3a3a;padding-left:1px">4</div>
<div class="t" style="left:628.0px;top:309.9px;width:26.5px;text-align:center;font-family:'Liberation Serif',serif;font-size:7.6px;color:#3a3a3a;padding-left:1px">5</div>
<div class="t" style="left:654.5px;top:309.9px;width:25.5px;text-align:center;font-family:'Liberation Serif',serif;font-size:7.6px;color:#3a3a3a;padding-left:1px">5</div>
<div class="t" style="left:680.0px;top:309.9px;width:26.5px;text-align:center;font-family:'Liberation Serif',serif;font-size:7.6px;color:#3a3a3a;padding-left:1px">5</div>
<div class="t" style="left:706.5px;top:309.9px;width:26.0px;text-align:center;font-family:'Liberation Serif',serif;font-size:7.6px;color:#3a3a3a;padding-left:1px">5</div>
<div class="t" style="left:732.5px;top:309.9px;width:26.0px;text-align:center;font-family:'Liberation Serif',serif;font-size:7.6px;color:#3a3a3a;padding-left:1px">5</div>
<div class="t" style="left:758.5px;top:309.9px;width:26.0px;text-align:center;font-family:'Liberation Serif',serif;font-size:7.6px;color:#3a3a3a;padding-left:1px">5</div>
<div class="t" style="left:784.5px;top:309.9px;width:26.0px;text-align:center;font-family:'Liberation Serif',serif;font-size:7.6px;color:#3a3a3a;padding-left:1px">5</div>
<div class="t" style="left:535px;top:322.7px;width:69px;text-align:center;font-family:'Liberation Serif',serif;font-size:7.2px;color:#111">Четвёртая четверть</div>
<div class="t" style="left:601.5px;top:321.9px;width:26.5px;text-align:center;font-family:'Liberation Serif',serif;font-size:7.6px;color:#3a3a3a;padding-left:1px">5</div>
<div class="t" style="left:628.0px;top:321.9px;width:26.5px;text-align:center;font-family:'Liberation Serif',serif;font-size:7.6px;color:#3a3a3a;padding-left:1px">5</div>
<div class="t" style="left:654.5px;top:321.9px;width:25.5px;text-align:center;font-family:'Liberation Serif',serif;font-size:7.6px;color:#3a3a3a;padding-left:1px">5</div>
<div class="t" style="left:680.0px;top:321.9px;width:26.5px;text-align:center;font-family:'Liberation Serif',serif;font-size:7.6px;color:#3a3a3a;padding-left:1px">5</div>
<div class="t" style="left:706.5px;top:321.9px;width:26.0px;text-align:center;font-family:'Liberation Serif',serif;font-size:7.6px;color:#3a3a3a;padding-left:1px">5</div>
<div class="t" style="left:732.5px;top:321.9px;width:26.0px;text-align:center;font-family:'Liberation Serif',serif;font-size:7.6px;color:#3a3a3a;padding-left:1px">5</div>
<div class="t" style="left:758.5px;top:321.9px;width:26.0px;text-align:center;font-family:'Liberation Serif',serif;font-size:7.6px;color:#3a3a3a;padding-left:1px">5</div>
<div class="t" style="left:784.5px;top:321.9px;width:26.0px;text-align:center;font-family:'Liberation Serif',serif;font-size:7.6px;color:#3a3a3a;padding-left:1px">5</div>
<div class="t" style="left:535px;top:334.7px;width:69px;text-align:center;font-family:'Liberation Serif',serif;font-size:7.2px;color:#111">Промежуточная</div>
<div class="t" style="left:535px;top:346.7px;width:69px;text-align:center;font-family:'Liberation Serif',serif;font-size:7.2px;color:#111">Год. отметка</div>
<div class="t" style="left:601.5px;top:345.9px;width:26.5px;text-align:center;font-family:'Liberation Serif',serif;font-size:7.6px;color:#3a3a3a;padding-left:1px">5</div>
<div class="t" style="left:628.0px;top:345.9px;width:26.5px;text-align:center;font-family:'Liberation Serif',serif;font-size:7.6px;color:#3a3a3a;padding-left:1px">5</div>
<div class="t" style="left:654.5px;top:345.9px;width:25.5px;text-align:center;font-family:'Liberation Serif',serif;font-size:7.6px;color:#3a3a3a;padding-left:1px">5</div>
<div class="t" style="left:680.0px;top:345.9px;width:26.5px;text-align:center;font-family:'Liberation Serif',serif;font-size:7.6px;color:#3a3a3a;padding-left:1px">5</div>
<div class="t" style="left:706.5px;top:345.9px;width:26.0px;text-align:center;font-family:'Liberation Serif',serif;font-size:7.6px;color:#3a3a3a;padding-left:1px">5</div>
<div class="t" style="left:732.5px;top:345.9px;width:26.0px;text-align:center;font-family:'Liberation Serif',serif;font-size:7.6px;color:#3a3a3a;padding-left:1px">5</div>
<div class="t" style="left:758.5px;top:345.9px;width:26.0px;text-align:center;font-family:'Liberation Serif',serif;font-size:7.6px;color:#3a3a3a;padding-left:1px">5</div>
<div class="t" style="left:784.5px;top:345.9px;width:26.0px;text-align:center;font-family:'Liberation Serif',serif;font-size:7.6px;color:#3a3a3a;padding-left:1px">5</div>
<div class="t" style="left:535px;top:358.7px;width:69px;text-align:center;font-family:'Liberation Serif',serif;font-size:7.2px;color:#111">Экз. отметка</div>
<div class="t" style="left:535px;top:370.7px;width:69px;text-align:center;font-family:'Liberation Serif',serif;font-size:7.2px;color:#111">Итог. отметка</div>
<div class="t" style="left:355.5px;top:380.5px;font-family:'Liberation Serif',serif;font-size:7.5px;color:#222">2</div>
<div class="t" style="left:366.0px;top:380.0px;font-family:'Liberation Serif',serif;font-size:8.5px;color:#111">Сидоров Петр</div>
<div class="t" style="left:535px;top:382.7px;width:69px;text-align:center;font-family:'Liberation Serif',serif;font-size:7.2px;color:#111">Первая четверть</div>
<div class="t" style="left:601.5px;top:381.9px;width:26.5px;text-align:center;font-family:'Liberation Serif',serif;font-size:7.6px;color:#3a3a3a;padding-left:1px">3</div>
<div class="t" style="left:628.0px;top:381.9px;width:26.5px;text-align:center;font-family:'Liberation Serif',serif;font-size:7.6px;color:#3a3a3a;padding-left:1px">4</div>
<div class="t" style="left:654.5px;top:381.9px;width:25.5px;text-align:center;font-family:'Liberation Serif',serif;font-size:7.6px;color:#3a3a3a;padding-left:1px">3</div>
<div class="t" style="left:680.0px;top:381.9px;width:26.5px;text-align:center;font-family:'Liberation Serif',serif;font-size:7.6px;color:#3a3a3a;padding-left:1px">3</div>
<div class="t" style="left:706.5px;top:381.9px;width:26.0px;text-align:center;font-family:'Liberation Serif',serif;font-size:7.6px;color:#3a3a3a;padding-left:1px">4</div>
<div class="t" style="left:732.5px;top:381.9px;width:26.0px;text-align:center;font-family:'Liberation Serif',serif;font-size:7.6px;color:#3a3a3a;padding-left:1px">5</div>
<div class="t" style="left:758.5px;top:381.9px;width:26.0px;text-align:center;font-family:'Liberation Serif',serif;font-size:7.6px;color:#3a3a3a;padding-left:1px">5</div>
<div class="t" style="left:784.5px;top:381.9px;width:26.0px;text-align:center;font-family:'Liberation Serif',serif;font-size:7.6px;color:#3a3a3a;padding-left:1px">5</div>
<div class="t" style="left:535px;top:394.7px;width:69px;text-align:center;font-family:'Liberation Serif',serif;font-size:7.2px;color:#111">Вторая четверть</div>
<div class="t" style="left:601.5px;top:393.9px;width:26.5px;text-align:center;font-family:'Liberation Serif',serif;font-size:7.6px;color:#3a3a3a;padding-left:1px">3</div>
<div class="t" style="left:628.0px;top:393.9px;width:26.5px;text-align:center;font-family:'Liberation Serif',serif;font-size:7.6px;color:#3a3a3a;padding-left:1px">3</div>
<div class="t" style="left:654.5px;top:393.9px;width:25.5px;text-align:center;font-family:'Liberation Serif',serif;font-size:7.6px;color:#3a3a3a;padding-left:1px">3</div>
<div class="t" style="left:680.0px;top:393.9px;width:26.5px;text-align:center;font-family:'Liberation Serif',serif;font-size:7.6px;color:#3a3a3a;padding-left:1px">3</div>
<div class="t" style="left:706.5px;top:393.9px;width:26.0px;text-align:center;font-family:'Liberation Serif',serif;font-size:7.6px;color:#3a3a3a;padding-left:1px">4</div>
<div class="t" style="left:732.5px;top:393.9px;width:26.0px;text-align:center;font-family:'Liberation Serif',serif;font-size:7.6px;color:#3a3a3a;padding-left:1px">5</div>
<div class="t" style="left:758.5px;top:393.9px;width:26.0px;text-align:center;font-family:'Liberation Serif',serif;font-size:7.6px;color:#3a3a3a;padding-left:1px">5</div>
<div class="t" style="left:784.5px;top:393.9px;width:26.0px;text-align:center;font-family:'Liberation Serif',serif;font-size:7.6px;color:#3a3a3a;padding-left:1px">5</div>
<div class="t" style="left:535px;top:406.7px;width:69px;text-align:center;font-family:'Liberation Serif',serif;font-size:7.2px;color:#111">Третья четверть</div>
<div class="t" style="left:601.5px;top:405.9px;width:26.5px;text-align:center;font-family:'Liberation Serif',serif;font-size:7.6px;color:#3a3a3a;padding-left:1px">3</div>
<div class="t" style="left:628.0px;top:405.9px;width:26.5px;text-align:center;font-family:'Liberation Serif',serif;font-size:7.6px;color:#3a3a3a;padding-left:1px">4</div>
<div class="t" style="left:654.5px;top:405.9px;width:25.5px;text-align:center;font-family:'Liberation Serif',serif;font-size:7.6px;color:#3a3a3a;padding-left:1px">3</div>
<div class="t" style="left:680.0px;top:405.9px;width:26.5px;text-align:center;font-family:'Liberation Serif',serif;font-size:7.6px;color:#3a3a3a;padding-left:1px">3</div>
<div class="t" style="left:706.5px;top:405.9px;width:26.0px;text-align:center;font-family:'Liberation Serif',serif;font-size:7.6px;color:#3a3a3a;padding-left:1px">4</div>
<div class="t" style="left:732.5px;top:405.9px;width:26.0px;text-align:center;font-family:'Liberation Serif',serif;font-size:7.6px;color:#3a3a3a;padding-left:1px">5</div>
<div class="t" style="left:758.5px;top:405.9px;width:26.0px;text-align:center;font-family:'Liberation Serif',serif;font-size:7.6px;color:#3a3a3a;padding-left:1px">5</div>
<div class="t" style="left:784.5px;top:405.9px;width:26.0px;text-align:center;font-family:'Liberation Serif',serif;font-size:7.6px;color:#3a3a3a;padding-left:1px">5</div>
<div class="t" style="left:535px;top:418.7px;width:69px;text-align:center;font-family:'Liberation Serif',serif;font-size:7.2px;color:#111">Четвёртая четверть</div>
<div class="t" style="left:601.5px;top:417.9px;width:26.5px;text-align:center;font-family:'Liberation Serif',serif;font-size:7.6px;color:#3a3a3a;padding-left:1px">3</div>
<div class="t" style="left:628.0px;top:417.9px;width:26.5px;text-align:center;font-family:'Liberation Serif',serif;font-size:7.6px;color:#3a3a3a;padding-left:1px">4</div>
<div class="t" style="left:654.5px;top:417.9px;width:25.5px;text-align:center;font-family:'Liberation Serif',serif;font-size:7.6px;color:#3a3a3a;padding-left:1px">3</div>
<div class="t" style="left:680.0px;top:417.9px;width:26.5px;text-align:center;font-family:'Liberation Serif',serif;font-size:7.6px;color:#3a3a3a;padding-left:1px">3</div>
<div class="t" style="left:706.5px;top:417.9px;width:26.0px;text-align:center;font-family:'Liberation Serif',serif;font-size:7.6px;color:#3a3a3a;padding-left:1px">4</div>
<div class="t" style="left:732.5px;top:417.9px;width:26.0px;text-align:center;font-family:'Liberation Serif',serif;font-size:7.6px;color:#3a3a3a;padding-left:1px">5</div>
<div class="t" style="left:758.5px;top:417.9px;width:26.0px;text-align:center;font-family:'Liberation Serif',serif;font-size:7.6px;color:#3a3a3a;padding-left:1px">5</div>
<div class="t" style="left:784.5px;top:417.9px;width:26.0px;text-align:center;font-family:'Liberation Serif',serif;font-size:7.6px;color:#3a3a3a;padding-left:1px">5</div>
<div class="t" style="left:535px;top:430.7px;width:69px;text-align:center;font-family:'Liberation Serif',serif;font-size:7.2px;color:#111">Промежуточная</div>
<div class="t" style="left:535px;top:442.7px;width:69px;text-align:center;font-family:'Liberation Serif',serif;font-size:7.2px;color:#111">Год. отметка</div>
<div class="t" style="left:601.5px;top:441.9px;width:26.5px;text-align:center;font-family:'Liberation Serif',serif;font-size:7.6px;color:#3a3a3a;padding-left:1px">3</div>
<div class="t" style="left:628.0px;top:441.9px;width:26.5px;text-align:center;font-family:'Liberation Serif',serif;font-size:7.6px;color:#3a3a3a;padding-left:1px">4</div>
<div class="t" style="left:654.5px;top:441.9px;width:25.5px;text-align:center;font-family:'Liberation Serif',serif;font-size:7.6px;color:#3a3a3a;padding-left:1px">3</div>
<div class="t" style="left:680.0px;top:441.9px;width:26.5px;text-align:center;font-family:'Liberation Serif',serif;font-size:7.6px;color:#3a3a3a;padding-left:1px">3</div>
<div class="t" style="left:706.5px;top:441.9px;width:26.0px;text-align:center;font-family:'Liberation Serif',serif;font-size:7.6px;color:#3a3a3a;padding-left:1px">4</div>
<div class="t" style="left:732.5px;top:441.9px;width:26.0px;text-align:center;font-family:'Liberation Serif',serif;font-size:7.6px;color:#3a3a3a;padding-left:1px">5</div>
<div class="t" style="left:758.5px;top:441.9px;width:26.0px;text-align:center;font-family:'Liberation Serif',serif;font-size:7.6px;color:#3a3a3a;padding-left:1px">5</div>
<div class="t" style="left:784.5px;top:441.9px;width:26.0px;text-align:center;font-family:'Liberation Serif',serif;font-size:7.6px;color:#3a3a3a;padding-left:1px">5</div>
<div class="t" style="left:535px;top:454.7px;width:69px;text-align:center;font-family:'Liberation Serif',serif;font-size:7.2px;color:#111">Экз. отметка</div>
<div class="t" style="left:535px;top:466.7px;width:69px;text-align:center;font-family:'Liberation Serif',serif;font-size:7.2px;color:#111">Итог. отметка</div>
<div class="a" style="left:0.0px;top:602.0px;width:1152.0px;height:16.0px;background:#f0f0f0;border-top:1px solid #dedede"></div>
<div class="t" style="left:5.0px;top:607.5px;font-size:8px;color:#555;transform:scaleX(.94);transform-origin:0 0">Страница 86 из 96</div>
<div class="t" style="left:81.0px;top:607.5px;font-size:8px;color:#555;transform:scaleX(.94);transform-origin:0 0">Число слов: 15332</div>
<svg class="a" style="left:160px;top:606px" width="11" height="10" viewBox="0 0 11 10"><path d="M0.5 1 h4 v8 h-4z M5.5 1 h4 v8 h-4z M6.5 4 l2 2 M8.5 4 l-2 2" stroke="#777" stroke-width="0.8" fill="none"/></svg>
<div class="t" style="left:180.0px;top:607.5px;font-size:8px;color:#555;transform:scaleX(.94);transform-origin:0 0">английский (США)</div>
  </div>
</div>
<!-- overlays -->
<div class="a" style="left:23px;top:60px;width:1217px;height:650px;border:1px solid #303033;border-radius:10px;pointer-events:none"></div>
<svg class="a" style="left:1015px;top:664px" width="190" height="12" viewBox="0 0 190 12">
<path d="M2 2 h4 v8 h-4z M7 2 h4 v8 h-4z" stroke="#777" stroke-width="0.8" fill="none"/>
<rect x="20" y="0" width="21" height="12" fill="#d6d6d6"/>
<path d="M26 3 h9 M26 5 h9 M26 7 h9 M26 9 h9" stroke="#777" stroke-width="0.8"/>
<path d="M50 2 h8 v8 h-8z M52 4 h4" stroke="#777" stroke-width="0.8" fill="none"/>
<path d="M71 6 h5" stroke="#555" stroke-width="1"/>
<path d="M80 6 h76" stroke="#bbb" stroke-width="1"/>
<rect x="111" y="2" width="2" height="8" fill="#555"/>
<path d="M157 6 h7 M160.5 2.5 v7" stroke="#555" stroke-width="1"/>
</svg>
<div class="t" style="left:1186px;top:666px;font-size:8px;color:#555">90%</div>
<div class="a" style="left:56px;top:678px;width:1152px;height:32px;background:linear-gradient(90deg,#15151a 0%,#1c2030 22%,#242a42 32%,#2b3050 41%,#35304e 56%,#3d2f50 70%,#2a2434 75%,#1a191f 79%,#151418 100%)"></div>
<div class="a" style="left:56px;top:678px;width:36px;height:32px;background:#131318"></div>
<svg class="a" style="left:67px;top:687px" width="14" height="14" viewBox="0 0 14 14"><path d="M0 2 l6-1 v5.5 h-6z M7 0.9 l7-1 v6.6 h-7z M0 7.5 h6 v5.5 l-6-1z M7 7.5 h7 v6.5 l-7-1z" fill="#fff"/></svg>
<div class="a" style="left:92px;top:678px;width:216px;height:32px;background:#f0f0f0"></div>
<svg class="a" style="left:100px;top:686px" width="14" height="14" viewBox="0 0 14 14"><circle cx="8.5" cy="5.5" r="4" stroke="#222" stroke-width="1.3" fill="none"/><path d="M5.5 8.5 L1 13" stroke="#222" stroke-width="1.5"/></svg>
<div class="t" style="left:122px;top:688px;font-size:11.5px;color:#333">Поиск</div>
<svg class="a" style="left:319px;top:687px" width="14" height="13" viewBox="0 0 14 13"><path d="M1 1 h8 M1 12 h8 M2 3 h6 v7 h-6z M12 1 v11" stroke="#ddd" stroke-width="1.2" fill="none"/></svg>
<svg class="a" style="left:356px;top:686px" width="16" height="16" viewBox="0 0 16 16"><path d="M4 1 l10 2 l-3 12 l-10-2z" fill="#a8d0f0"/><path d="M4 1 l10 2 l-1 3 l-10-2z" fill="#6aa8e0"/><path d="M1 13 l10 2 l1 -3z" fill="#e8f2fa"/></svg>
<svg class="a" style="left:392px;top:686px" width="19" height="15" viewBox="0 0 19 15"><path d="M0 1 h7 l2 2 h10 v12 h-19z" fill="#f0c040"/><rect x="0" y="5" width="19" height="10" fill="#f8d46a"/><rect x="5" y="9" width="9" height="5" fill="#3a86d0"/><rect x="7" y="11" width="5" height="3" fill="#f8d46a"/></svg>
<div class="a" style="left:387px;top:707px;width:30px;height:2px;background:#7aa6d8"></div>
<svg class="a" style="left:429px;top:685px" width="19" height="19" viewBox="0 0 19 19"><circle cx="9.5" cy="9.5" r="9" fill="#db4437"/><path d="M9.5 9.5 L1.7 5 A9 9 0 0 0 5 17.3z" fill="#0f9d58"/><path d="M9.5 9.5 L5 17.3 A9 9 0 0 0 18.5 9.5 L17.3 5z" fill="#f4c20d"/><circle cx="9.5" cy="9.5" r="4.2" fill="#fff"/><circle cx="9.5" cy="9.5" r="3.3" fill="#4285f4"/></svg>
<div class="a" style="left:424px;top:707px;width:30px;height:2px;background:#7aa6d8"></div>
<svg class="a" style="left:468px;top:685px" width="15" height="19" viewBox="0 0 15 19"><rect x="0" y="0" width="15" height="19" fill="#5a6270"/><rect x="1.5" y="1.5" width="12" height="4" fill="#9ad0f0"/><g fill="#d8dde4"><rect x="1.5" y="7" width="3.5" height="3"/><rect x="5.8" y="7" width="3.5" height="3"/><rect x="1.5" y="11" width="3.5" height="3"/><rect x="5.8" y="11" width="3.5" height="3"/><rect x="1.5" y="15" width="3.5" height="3"/><rect x="5.8" y="15" width="3.5" height="3"/></g><rect x="10" y="7" width="3.5" height="11" fill="#2a5ca8"/></svg>
<div class="a" style="left:495px;top:678px;width:37px;height:30px;background:#4a4f62"></div>
<div class="a" style="left:495px;top:707px;width:37px;height:2px;background:#7aa6d8"></div>
<svg class="a" style="left:505px;top:686px" width="17" height="15" viewBox="0 0 17 15"><rect x="7" y="0" width="10" height="15" fill="#fff"/><path d="M9 3 h6 M9 6 h6 M9 9 h6 M9 12 h6" stroke="#2b579a" stroke-width="1"/><rect x="0" y="1" width="11" height="13" fill="#2b579a"/><text x="1" y="11" font-size="9" font-weight="bold" fill="#fff" font-family="Liberation Sans">w</text></svg>
<svg class="a" style="left:985px;top:686px" width="105" height="16" viewBox="0 0 105 16">
<path d="M1 9 l5-5 l5 5" stroke="#ddd" stroke-width="1.2" fill="none"/>
<rect x="18" y="3" width="12" height="10" stroke="#ccc" stroke-width="1" fill="none"/><path d="M21 9 a3 3 0 0 1 5-2" stroke="#ccc" fill="none"/><circle cx="28.5" cy="12.5" r="2.5" fill="#f39a1e"/>
<path d="M36 4 h3 v2 h10 v6 h-11 v-6" stroke="#ddd" stroke-width="1.1" fill="none"/><rect x="39" y="7" width="9" height="4" fill="#ddd"/>
<rect x="56" y="2" width="5" height="10" rx="1.5" fill="#ddd"/><rect x="57" y="12" width="3" height="3" fill="#999"/>
<path d="M70 3 h11 v8 h-9 M75 11 v3 M72 14 h6 M68 3 v4" stroke="#ddd" stroke-width="1.1" fill="none"/>
<path d="M87 6 h2 l3-3 v10 l-3-3 h-2z M94 5 a3 3 0 0 1 0 6 M96 3 a5 5 0 0 1 0 10" stroke="#ddd" stroke-width="1" fill="none"/>
</svg>
<div class="t" style="left:1094px;top:689px;font-size:9.5px;color:#e8e8e8;transform:scaleX(.83);transform-origin:0 0">ENG</div>
<div class="t" style="left:1131px;top:682px;font-size:9.5px;color:#e8e8e8;transform:scaleX(.87);transform-origin:0 0">15:05</div>
<div class="t" style="left:1122px;top:697px;font-size:9.5px;color:#e8e8e8;transform:scaleX(.855);transform-origin:0 0">17.06.2025</div>
<svg class="a" style="left:1176px;top:686px" width="17" height="17" viewBox="0 0 17 17"><path d="M1 1 h12 v9 h-6 l-3 3 v-3 h-3z" fill="#eee"/><path d="M3 4 h8 M3 6 h8" stroke="#555" stroke-width="0.8"/><circle cx="12" cy="12" r="4.3" fill="#111" stroke="#ccc" stroke-width="0.8"/><text x="10.2" y="14.8" font-size="7" fill="#fff" font-family="Liberation Sans">1</text></svg>
<div class="a" style="left:1204px;top:678px;width:1px;height:32px;background:#444"></div>
<div class="a" style="left:999px;top:518px;width:195px;height:147px;background:radial-gradient(ellipse 75% 80% at 48% 42%,#3b3451 0%,#352e48 45%,#221e2c 85%,#18161e 100%);box-shadow:0 1px 3px rgba(0,0,0,0.35)"></div>
<div class="a" style="left:1057.5px;top:552.5px;width:79px;height:79px;border-radius:50%;background:#c7ccd6"></div>
<div class="a" style="left:1088px;top:572.5px;width:18px;height:18px;border-radius:50%;background:#eef0f3"></div>
<div class="a" style="left:1079px;top:594.5px;width:36px;height:15px;border-radius:18px 18px 2px 2px/15px 15px 2px 2px;background:#eef0f3"></div>
<div class="a" style="left:1148px;top:520px;width:44.5px;height:44.5px;border-radius:4px;overflow:hidden;background:#e4eaea"><div class="a" style="left:0;top:0;width:44.5px;height:44.5px;filter:blur(0.6px)"><div class="a" style="left:0;top:0;width:13px;height:40px;background:linear-gradient(180deg,#8e4e34,#7a3e28)"></div><div class="a" style="left:20px;top:-2px;width:10px;height:13px;border:1.5px solid #3a4a50;background:#d8ecec;transform:rotate(8deg)"></div><div class="a" style="left:31px;top:0px;width:11px;height:14px;border:1.5px solid #3a4a50;background:#d8ecec;transform:rotate(8deg)"></div><div class="a" style="left:7px;top:15px;width:34px;height:34px;border-radius:50% 50% 20% 20%;background:#1e1618"></div><div class="a" style="left:13px;top:28px;width:21px;height:18px;border-radius:35% 35% 45% 45%;background:#d4aaa6"></div><div class="a" style="left:21px;top:39px;width:8px;height:3px;border-radius:40%;background:#8a2a2a"></div><div class="a" style="left:10px;top:22px;width:26px;height:8px;background:#1e1618"></div><div class="a" style="left:-2px;top:39px;width:16px;height:8px;border-radius:40%;background:#a8a8d8"></div><div class="a" style="left:32px;top:40px;width:14px;height:6px;background:#8a88b0"></div></div></div>
<svg class="a" style="left:1151px;top:332px" width="9" height="14" viewBox="0 0 9 14"><path d="M1.5 1 h2 l1 1 l1-1 h2 M4.5 2 v10 M1.5 13 h2 l1-1 l1 1 h2" stroke="#fff" stroke-width="2.2" fill="none"/><path d="M1.5 1 h2 l1 1 l1-1 h2 M4.5 2 v10 M1.5 13 h2 l1-1 l1 1 h2" stroke="#222" stroke-width="0.9" fill="none"/></svg>
<div class="a" style="left:415px;top:635px;width:434px;height:38px;background:#fff;box-shadow:0 0 3px rgba(0,0,0,0.25);border-radius:2px"></div>
<div class="a" style="left:423px;top:650px;width:1px;height:9px;background:#c8c8c8"></div>
<div class="a" style="left:426px;top:650px;width:1px;height:9px;background:#c8c8c8"></div>
<div class="t" style="left:435px;top:650px;font-size:10px;color:#333;transform:scaleX(.895);transform-origin:0 0">Приложению web.vk.me предоставлен доступ к вашему экрану.</div>
<div class="a" style="left:707px;top:640px;width:97px;height:29px;background:#0b57d0;border-radius:15px"></div>
<div class="t" style="left:719px;top:650px;font-size:10px;font-weight:bold;color:#fff;transform:scaleX(.89);transform-origin:0 0">Закрыть доступ</div>
<div class="t" style="left:811px;top:650px;font-size:10px;color:#0b57d0;transform:scaleX(.88);transform-origin:0 0"><u>Скрыть</u></div>
<div class="a" style="left:40px;top:82px;width:300px;height:42px;background:rgba(0,0,0,0.28);border-radius:21px;box-shadow:inset 0 0 0 1px rgba(255,255,255,0.06)"></div>
<svg class="a" style="left:56px;top:93px" width="18" height="18" viewBox="0 0 18 18"><g transform="rotate(45 9 9)"><path d="M5.5 0.5 h7 v1.8 h-1 v4.7 l2.8 2.8 v1.4 h-10.6 v-1.4 l2.8-2.8 v-4.7 h-1z" fill="#fff"/><path d="M9 11 v7" stroke="#fff" stroke-width="1.6" stroke-linecap="round"/></g></svg>
<div class="t" style="left:81px;top:93px;font-size:16.5px;color:#fff">Экран Иван Дмитриевич Долгов</div>
<div class="a" style="left:350px;top:82px;width:148px;height:42px;background:rgba(0,0,0,0.28);border-radius:21px"></div>
<div class="a" style="left:356px;top:87px;width:92px;height:32px;background:rgba(255,255,255,0.14);border-radius:16px"></div>
<svg class="a" style="left:367px;top:94px" width="18" height="16" viewBox="0 0 18 16"><rect x="0" y="0" width="18" height="16" rx="4" fill="#fff"/><path d="M9 12.5 v-8 M5.5 8 l3.5-3.5 l3.5 3.5" stroke="#222" stroke-width="1.8" fill="none"/></svg>
<div class="t" style="left:391px;top:93px;font-size:16.5px;color:#fff">Экран</div>
<svg class="a" style="left:465px;top:95px" width="20" height="14" viewBox="0 0 20 14"><rect x="0" y="0" width="14" height="14" rx="4" fill="#fff"/><path d="M15 4.5 l4-3 v11 l-4-3z" fill="#fff"/></svg>
<!-- tiles -->
<div class="a" style="left:1271px;top:61.5px;width:298px;height:161.5px;border-radius:6px;background:radial-gradient(ellipse 62% 78% at 50% 46%,#364343 0%,#313d3d 40%,#222a2b 72%,#111414 100%);box-shadow:inset 0 0 0 1px rgba(255,255,255,0.07)"></div>
<div class="a" style="left:1380px;top:98.5px;width:80px;height:80px;border-radius:50%;overflow:hidden;background:#d6d5d2"><div class="a" style="left:0;top:0;width:80px;height:80px;filter:blur(1.2px)"><div class="a" style="left:-2px;top:20px;width:12px;height:40px;background:#c4c2be"></div><div class="a" style="left:6px;top:-4px;width:52px;height:90px;border-radius:50% 40% 30% 30%;background:radial-gradient(ellipse at 40% 50%,#6a4634 0%,#503224 50%,#2e1c14 100%)"></div><div class="a" style="left:50px;top:6px;width:19px;height:74px;border-radius:40% 60% 40% 40%;background:linear-gradient(90deg,#3a2418,#5e3e2c 60%,#4a3022)"></div><div class="a" style="left:46px;top:50px;width:28px;height:32px;border-radius:40%;background:#4a2e20"></div><div class="a" style="left:24px;top:5px;width:34px;height:42px;border-radius:45% 45% 50% 50%;background:radial-gradient(ellipse at 55% 45%,#e8b89e 0%,#d8a48a 55%,#b88068 100%)"></div><div class="a" style="left:22px;top:-2px;width:38px;height:10px;border-radius:50%;background:#4a2c1e"></div><div class="a" style="left:32px;top:46px;width:24px;height:36px;border-radius:40% 40% 20% 20%;background:linear-gradient(180deg,#c08a70,#b07a62)"></div><div class="a" style="left:30px;top:66px;width:10px;height:16px;background:#3a2418"></div></div></div>
<div class="t" style="left:1398px;top:195px;font-size:15px;font-weight:bold;color:#cfcfd2">Вы</div>
<svg class="a" style="left:1425px;top:196px" width="15" height="16" viewBox="0 0 15 16"><rect x="4.5" y="0.5" width="6" height="9" rx="3" fill="#d6d6d8"/><path d="M2.5 7 a5 5 0 0 0 10 0 M7.5 12 v3.5" stroke="#d6d6d8" stroke-width="1.6" fill="none"/><path d="M1.5 1.5 L13.5 14.5" stroke="#1e2526" stroke-width="3"/><path d="M1.5 1.5 L13.5 14.5" stroke="#d6d6d8" stroke-width="1.5"/></svg>
<div class="a" style="left:1270px;top:228.5px;width:300px;height:162px;border-radius:7px;overflow:hidden"><div class="a" style="left:0;top:0;width:300px;height:162px;background:linear-gradient(180deg,#e8e6e0 0%,#e2e0da 45%,#c8c8c4 75%,#9c9c9a 100%)"></div><div class="a" style="left:0;top:0;width:120px;height:162px;background:linear-gradient(90deg,rgba(0,0,0,0.06),rgba(0,0,0,0))"></div><div class="a" style="left:183px;top:0;width:62px;height:162px;background:linear-gradient(180deg,#8e4c36 0%,#83422e 50%,#6c3624 100%)"></div><div class="a" style="left:245px;top:0;width:6px;height:162px;background:#3c2419"></div><div class="a" style="left:250.5px;top:0;width:21px;height:162px;background:linear-gradient(180deg,#6e4a3a,#584030)"></div><div class="a" style="left:271px;top:27px;width:15px;height:135px;background:linear-gradient(180deg,#8a4632,#6e3626)"></div><div class="a" style="left:286px;top:0;width:14px;height:162px;background:#e2ded6"></div><div class="a" style="left:86px;top:-2px;width:42px;height:46px;border:3px solid #1e2838;background:#e6f2ee;transform:rotate(4deg);transform-origin:0 0"></div><div class="a" style="left:100px;top:6px;width:20px;height:22px;border-radius:50%;border:1px solid #8ab0a8"></div><div class="a" style="left:138px;top:-2px;width:28px;height:46px;border:2px solid #3a4a48;background:#e4eee8;transform:rotate(6deg);transform-origin:0 0"></div><div class="a" style="left:142px;top:12px;width:16px;height:16px;background:#c8dcd2"></div><div class="a" style="left:90px;top:44px;width:136px;height:120px;border-radius:50% 50% 22% 22%/62% 62% 20% 20%;background:#1e1618;filter:blur(1.5px)"></div><div class="a" style="left:0;top:0;width:0;height:0"></div><div class="a" style="left:112px;top:94px;width:88px;height:70px;border-radius:30% 30% 45% 45%;background:radial-gradient(ellipse 60% 60% at 48% 45%,#dcb4a6 0%,#c89e8e 55%,#9a6e62 100%);filter:blur(1px)"></div><div class="a" style="left:104px;top:78px;width:104px;height:20px;border-radius:0 0 30% 30%;background:#1e1618;filter:blur(1px)"></div><div class="a" style="left:128px;top:104px;width:16px;height:5px;border-radius:50%;background:#5a3a36;filter:blur(1.2px)"></div><div class="a" style="left:164px;top:103px;width:16px;height:5px;border-radius:50%;background:#5a3a36;filter:blur(1.2px)"></div><div class="a" style="left:146px;top:112px;width:12px;height:16px;border-radius:40%;background:#e2bcae;filter:blur(1.5px)"></div><div class="a" style="left:140px;top:134px;width:26px;height:6px;border-radius:50%;background:#8a5a56;filter:blur(1.2px)"></div><div class="a" style="left:64px;top:140px;width:190px;height:30px;border-radius:45% 45% 0 0;background:linear-gradient(90deg,#50567a,#6c7298 30%,#6a7094 70%,#40445a);filter:blur(1px)"></div><div class="a" style="left:128px;top:150px;width:56px;height:16px;background:#a47a70;filter:blur(2px)"></div><div class="a" style="left:0;top:110px;width:300px;height:52px;background:linear-gradient(180deg,rgba(0,0,0,0),rgba(0,0,0,0.22))"></div></div>
<div class="a" style="left:1270px;top:228.5px;width:300px;height:162px;border-radius:7px;border:3px solid rgba(225,225,220,0.85)"></div>
<svg class="a" style="left:1281px;top:363px" width="18" height="15" viewBox="0 0 18 15"><rect x="0" y="0" width="18" height="15" rx="3.5" fill="#e8e8e8"/><path d="M9 12 v-7.5 M5.8 7.5 l3.2-3.2 l3.2 3.2" stroke="#333" stroke-width="1.7" fill="none"/></svg>
<div class="t" style="left:1345px;top:362px;font-size:15px;font-weight:bold;color:#e6e6e6;letter-spacing:0.35px">Иван Дмитриеви...</div>
<svg class="a" style="left:1251px;top:378px" width="10" height="14" viewBox="0 0 10 14"><path d="M2 1.5 l6 5.5 l-6 5.5" stroke="#8a8a8c" stroke-width="1.8" fill="none"/></svg>
<div class="a" style="left:1271px;top:396.5px;width:298px;height:161.5px;border-radius:6px;background:radial-gradient(ellipse 62% 78% at 50% 46%,#3d3451 0%,#382f4a 40%,#272234 72%,#121115 100%);box-shadow:inset 0 0 0 1px rgba(255,255,255,0.07)"></div>
<div class="a" style="left:1380px;top:434px;width:80px;height:80px;border-radius:50%;background:#c9ced8"></div>
<div class="a" style="left:1410px;top:453.5px;width:20px;height:20px;border-radius:50%;background:#f2f3f6"></div>
<div class="a" style="left:1402px;top:476.5px;width:36px;height:15px;border-radius:18px 18px 2px 2px/15px 15px 2px 2px;background:#f2f3f6"></div>
<div class="t" style="left:1294px;top:530px;font-size:15px;font-weight:bold;color:#cfcfd2">Наталья Евгеньевна Суханова</div>
<svg class="a" style="left:1529px;top:530px" width="15" height="16" viewBox="0 0 15 16"><rect x="4.5" y="0.5" width="6" height="9" rx="3" fill="#d6d6d8"/><path d="M2.5 7 a5 5 0 0 0 10 0 M7.5 12 v3.5" stroke="#d6d6d8" stroke-width="1.6" fill="none"/><path d="M1.5 1.5 L13.5 14.5" stroke="#1e2526" stroke-width="3"/><path d="M1.5 1.5 L13.5 14.5" stroke="#d6d6d8" stroke-width="1.5"/></svg>
<div class="a" style="left:1271px;top:564.5px;width:298px;height:145.5px;overflow:hidden;border-radius:6px 6px 0 0">
<div class="a" style="left:0;top:0;width:298px;height:161.5px;border-radius:6px;background:radial-gradient(ellipse 62% 78% at 50% 46%,#364343 0%,#313d3d 40%,#222a2b 72%,#111414 100%);box-shadow:inset 0 0 0 1px rgba(255,255,255,0.07)"></div>
</div>
<div class="a" style="left:1380px;top:601px;width:80px;height:80px;border-radius:50%;background:#c9ced8"></div>
<div class="a" style="left:1410px;top:620.5px;width:20px;height:20px;border-radius:50%;background:#f2f3f6"></div>
<div class="a" style="left:1402px;top:643.5px;width:36px;height:15px;border-radius:18px 18px 2px 2px/15px 15px 2px 2px;background:#f2f3f6"></div>
<div class="a" style="left:1271px;top:690px;width:298px;height:20px;overflow:hidden">
<div class="t" style="left:27px;top:6px;font-size:15px;font-weight:bold;color:#cfcfd2;letter-spacing:0.28px">Яна Александровна Дронова</div>
</div>
<div class="a" style="left:1271px;top:690px;width:298px;height:20px;overflow:hidden"><svg class="a" style="left:254px;top:5px" width="15" height="16" viewBox="0 0 15 16"><rect x="4.5" y="0.5" width="6" height="9" rx="3" fill="#d6d6d8"/><path d="M2.5 7 a5 5 0 0 0 10 0" stroke="#d6d6d8" stroke-width="1.6" fill="none"/><path d="M1.5 1.5 L13.5 14.5" stroke="#1e2526" stroke-width="3"/><path d="M1.5 1.5 L13.5 14.5" stroke="#d6d6d8" stroke-width="1.5"/></svg></div>
<!-- bottom controls -->
<svg class="a" style="left:41px;top:755px" width="26" height="21" viewBox="0 0 26 21"><rect x="0.5" y="0.5" width="25" height="20" rx="5.5" fill="#e4e4e6"/><path d="M13 14.5 v-8.5 M9 10 l4-4 l4 4" stroke="#111" stroke-width="2.3" fill="none" stroke-linecap="round" stroke-linejoin="round"/></svg>
<svg class="a" style="left:120px;top:754px" width="30" height="26" viewBox="0 0 30 26"><rect x="1" y="1" width="26" height="21" rx="5.5" fill="#e4e4e6"/><path d="M1.5 9 c2.5-2.5 4.5-2.5 5.5 0.5 s2.5 4.5 5.5 0.8 l2.5-3" stroke="#111" stroke-width="2" fill="none" stroke-linecap="round"/><path d="M13.5 25 l1.2-5.2 l10.5-10.5 l4 4 l-10.5 10.5z" fill="#111"/><path d="M15.8 22.6 l0.7-2.8 l8.7-8.7 l2.1 2.1 l-8.7 8.7z" fill="#e4e4e6"/><path d="M22.5 12 l3.5 3.5" stroke="#111" stroke-width="1"/></svg>
<div class="a" style="left:151.5px;top:734.5px;width:33px;height:18px;border-radius:9px;background:#a2a2a4"></div>
<div class="t" style="left:157px;top:737.5px;font-size:11.5px;font-weight:bold;color:#d8d8da;transform:scaleX(.9);transform-origin:0 0">beta</div>
<div class="a" style="left:633px;top:735px;width:60px;height:60px;border-radius:50%;background:#0f0f10"></div>
<svg class="a" style="left:648px;top:749px" width="30" height="32" viewBox="0 0 30 32"><g transform="rotate(-22 14 16)"><g stroke="#fff" stroke-linecap="round" stroke-width="3"><path d="M6.5 17 V8.5"/><path d="M10.6 15 V4.5"/><path d="M14.7 15 V4"/><path d="M18.8 16 V6.5"/><path d="M22.5 19.5 l2.6-5"/></g><path d="M5 14 h15.5 v5 l2.5-1.5 l1 3.5 c-2 3.5 -4.5 6 -9 6 c-5 0 -10 -3.5 -10 -8z" fill="#fff"/></g><path d="M16 23.5 a2.9 2.9 0 0 1 5 -2 a2.9 2.9 0 0 1 5 2 c0 2.8 -5 6 -5 6 s-5 -3.2 -5 -6z" fill="#fff" stroke="#0f0f10" stroke-width="1.6"/></svg>
<div class="a" style="left:723px;top:735px;width:60px;height:60px;border-radius:50%;background:#fff"></div>
<svg class="a" style="left:740px;top:756px" width="27" height="18" viewBox="0 0 27 18"><rect x="0" y="0.5" width="17" height="17" rx="4" fill="#111"/><path d="M18 6 l8-4.5 v15 l-8-4.5z" fill="#111"/><path d="M1 -1 L19 19" stroke="#fff" stroke-width="4"/><path d="M1 -1 L19 19" stroke="#ee5566" stroke-width="1.8"/></svg>
<div class="a" style="left:813px;top:735px;width:60px;height:60px;border-radius:50%;background:#fff"></div>
<svg class="a" style="left:831px;top:752px" width="25" height="27" viewBox="0 0 25 27"><rect x="8" y="1" width="9" height="14" rx="4.5" fill="#111"/><path d="M4.5 12 a8 8 0 0 0 16 0 M12.5 20 v6" stroke="#111" stroke-width="2.2" fill="none"/><path d="M4 1 L22 19" stroke="#fff" stroke-width="4"/><path d="M4 1 L22 19" stroke="#ee5566" stroke-width="1.8"/></svg>
<div class="a" style="left:903px;top:735px;width:60px;height:60px;border-radius:50%;background:#e64646"></div>
<svg class="a" style="left:922px;top:754px" width="22" height="22" viewBox="0 0 22 22"><path d="M2 2 L20 20 M20 2 L2 20" stroke="#fff" stroke-width="2.6" stroke-linecap="round"/></svg>
<svg class="a" style="left:1133px;top:765px" width="28" height="14" viewBox="0 0 28 14"><path d="M3 2 h22 c-2 5 -8 8 -16 8 l-6 3.5 l2.5-4.5 c-1-0.3 -1.5-1 -2.5-1z" fill="#fff"/></svg>
<div class="a" style="left:1131.5px;top:750px;width:30.5px;height:16.5px;border-radius:8.5px;background:#f0694a"></div>
<div class="t" style="left:1136px;top:752.5px;font-size:12px;font-weight:bold;color:#fff;transform:scaleX(.92);transform-origin:0 0">99+</div>
<svg class="a" style="left:1212px;top:755px" width="30" height="20" viewBox="0 0 30 20"><circle cx="9.5" cy="5.5" r="5" fill="#e4e4e6"/><path d="M0.5 19 a9 7.5 0 0 1 18 0 z" fill="#e4e4e6"/><path d="M20 11.5 a8 6 0 0 1 9.5 7.5 h-8.5 a10 9 0 0 0 -3-6.5z" fill="#e4e4e6"/></svg>
<div class="a" style="left:1229px;top:744px;width:22px;height:18px;border-radius:9px;background:#4e8fe0"></div>
<div class="t" style="left:1233px;top:747px;font-size:12px;font-weight:bold;color:#fff">96</div>
<svg class="a" style="left:1295px;top:753px" width="24" height="24" viewBox="0 0 24 24"><g fill="none" stroke="#e4e4e6" stroke-width="2.2"><rect x="1.5" y="1.5" width="8" height="8" rx="2.2"/><rect x="14.5" y="1.5" width="8" height="8" rx="2.2"/><rect x="1.5" y="14.5" width="8" height="8" rx="2.2"/><rect x="14.5" y="14.5" width="8" height="8" rx="2.2"/></g></svg>
<svg class="a" style="left:1371px;top:752px" width="26" height="26" viewBox="0 0 26 26"><polygon points="13.00,0.20 16.90,3.58 22.05,3.95 22.42,9.10 25.80,13.00 22.42,16.90 22.05,22.05 16.90,22.42 13.00,25.80 9.10,22.42 3.95,22.05 3.58,16.90 0.20,13.00 3.58,9.10 3.95,3.95 9.10,3.58" fill="#e4e4e6" stroke="#e4e4e6" stroke-width="1.5" stroke-linejoin="round"/><circle cx="13" cy="13" r="5.3" fill="#1b1b1d"/></svg>
<svg class="a" style="left:1450px;top:753px" width="24" height="24" viewBox="0 0 24 24"><rect x="1.5" y="1.5" width="21" height="21" rx="4.5" fill="none" stroke="#e4e4e6" stroke-width="2.2"/><path d="M1.5 11.5 h10 v11 h-6 a4 4 0 0 1 -4-4z" fill="#e4e4e6"/></svg>
<svg class="a" style="left:1530px;top:754px" width="23" height="22" viewBox="0 0 23 22"><path d="M13 2 h8 v8 M21 2 l-7.5 7.5 M10 20 h-8 v-8 M2 20 l7.5-7.5" stroke="#e4e4e6" stroke-width="2.2" fill="none" stroke-linecap="round" stroke-linejoin="round"/></svg>
</body></html>
